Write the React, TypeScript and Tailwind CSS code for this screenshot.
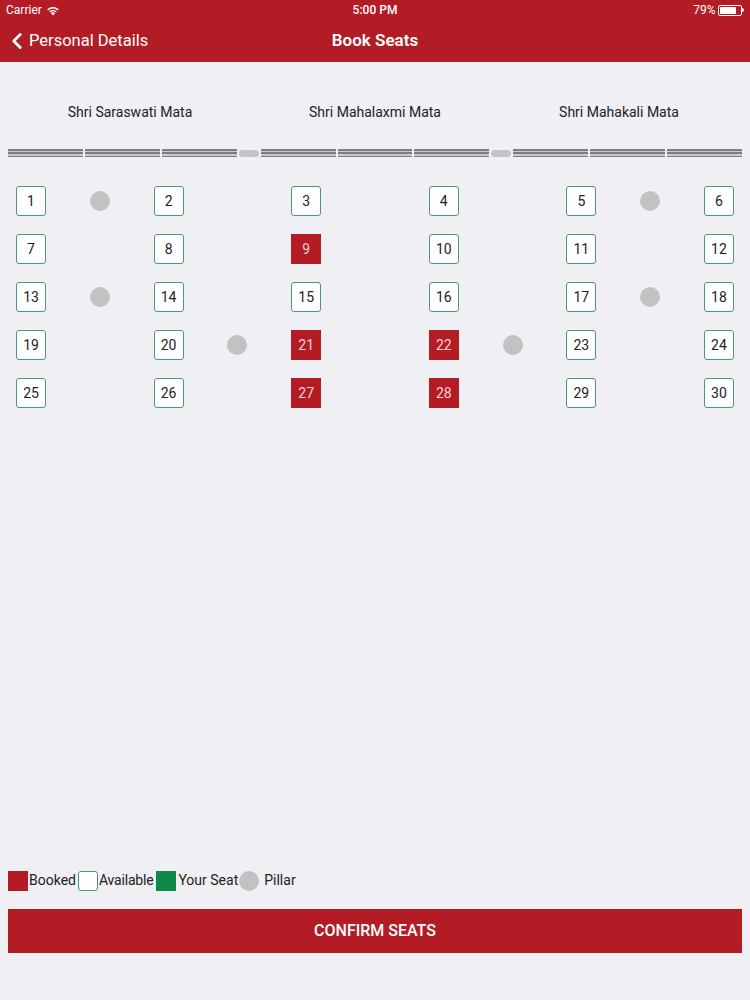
import { ChevronLeft } from 'lucide-react';

type SeatState = 'available' | 'booked';

const booked = new Set([9, 21, 22, 27, 28]);

// pillars by row index -> grid column index (0..10)
const pillars: Record<number, number[]> = {
  0: [1, 9],
  2: [1, 9],
  3: [3, 7],
};

const seatCols = [0, 2, 4, 6, 8, 10];

function Seat({ n }: { n: number }) {
  const state: SeatState = booked.has(n) ? 'booked' : 'available';
  return state === 'booked' ? (
    <div className="w-[30px] h-[30px] bg-[#b31c25] flex items-center justify-center text-[14px] text-[#f6d6d6]">
      {n}
    </div>
  ) : (
    <div className="w-[30px] h-[30px] bg-white border border-[#4a977a] rounded-[3px] flex items-center justify-center text-[14px] text-[#222]">
      {n}
    </div>
  );
}

function Pillar() {
  return <div className="w-[20px] h-[20px] rounded-full bg-[#c2c2c4]" />;
}

function Segment() {
  return (
    <div className="flex-1 h-[8px] bg-[#c9c9cc] flex flex-col justify-between">
      <div className="h-[1.5px] bg-[#7d7d80]" />
      <div className="h-[1.5px] bg-[#7d7d80]" />
      <div className="h-[1.5px] bg-[#7d7d80]" />
    </div>
  );
}

function Door() {
  return <div className="w-[20px] h-[7px] rounded-full bg-[#c4c4c6]" />;
}

function WifiIcon() {
  return (
    <svg width="14" height="11" viewBox="0 0 14 11" fill="white">
      <path d="M7 10.5 L4.9 8.1 A3.2 3.2 0 0 1 9.1 8.1 Z" />
      <path d="M3.3 6.5 A5.4 5.4 0 0 1 10.7 6.5 L9.7 7.6 A4 4 0 0 0 4.3 7.6 Z" />
      <path d="M1.3 4.3 A8.4 8.4 0 0 1 12.7 4.3 L11.7 5.4 A7 7 0 0 0 2.3 5.4 Z" />
    </svg>
  );
}

export default function App() {
  const rows = [0, 1, 2, 3, 4];

  return (
    <div className="w-[750px] h-[1000px] bg-[#efeff4] flex flex-col font-['Roboto',sans-serif]">
      {/* status + nav bar */}
      <div className="bg-[#b31c25] text-white">
        <div className="h-[20px] px-[6px] flex items-center justify-between text-[12px]">
          <div className="flex items-center gap-[4px] w-[120px]">
            <span>Carrier</span>
            <WifiIcon />
          </div>
          <span className="font-medium">5:00 PM</span>
          <div className="flex items-center justify-end gap-[3px] w-[120px]">
            <span>79%</span>
            <div className="flex items-center">
              <div className="w-[24px] h-[11px] border border-white rounded-[2px] p-[1px]">
                <div className="h-full w-[79%] bg-white rounded-[1px]" />
              </div>
              <div className="w-[1.5px] h-[4px] bg-white rounded-r-sm" />
            </div>
          </div>
        </div>
        <div className="h-[42px] relative flex items-center justify-center">
          <div className="absolute left-[4px] top-0 h-full flex items-center">
            <ChevronLeft size={26} strokeWidth={2.6} className="-mr-[1px]" />
            <span className="text-[16.5px]">Personal Details</span>
          </div>
          <span className="text-[17px] font-semibold">Book Seats</span>
        </div>
      </div>

      {/* section headings */}
      <div className="grid grid-cols-3 mt-[40px] text-[14px] text-[#222]">
        <div className="text-center pl-[10px]">Shri Saraswati Mata</div>
        <div className="text-center">Shri Mahalaxmi Mata</div>
        <div className="text-center pr-[12px]">Shri Mahakali Mata</div>
      </div>

      {/* screen divider */}
      <div className="mt-[26px] px-[8px] flex items-center gap-[2px]">
        <Segment />
        <Segment />
        <Segment />
        <Door />
        <Segment />
        <Segment />
        <Segment />
        <Door />
        <Segment />
        <Segment />
        <Segment />
      </div>

      {/* seats */}
      <div className="mt-[29px] ml-[-3.4px] grid grid-cols-[repeat(11,68.8px)] gap-y-[18px]">
        {rows.map((r) =>
          Array.from({ length: 11 }).map((_, c) => {
            const seatIdx = seatCols.indexOf(c);
            let content = null;
            if (seatIdx >= 0) content = <Seat n={r * 6 + seatIdx + 1} />;
            else if (pillars[r]?.includes(c)) content = <Pillar />;
            return (
              <div key={`${r}-${c}`} className="h-[30px] flex items-center justify-center">
                {content}
              </div>
            );
          })
        )}
      </div>

      <div className="flex-1" />

      {/* legend */}
      <div className="px-[8px] flex items-center text-[14px] text-[#222]">
        <div className="w-[20px] h-[20px] bg-[#b31c25]" />
        <span className="ml-[1px]">Booked</span>
        <div className="ml-[2px] w-[20px] h-[20px] bg-white border border-[#4a977a] rounded-[3px]" />
        <span className="ml-[1px] tracking-[-0.2px]">Available</span>
        <div className="ml-[3px] w-[20px] h-[20px] bg-[#0e8a48]" />
        <span className="ml-[2px]">Your Seat</span>
        <div className="ml-[1px] w-[20px] h-[20px] rounded-full bg-[#c2c2c4]" />
        <span className="ml-[5px]">Pillar</span>
      </div>

      {/* confirm */}
      <div className="mt-[18px] mb-[47px] px-[8px]">
        <button className="w-full h-[44px] bg-[#b31c25] text-white text-[16px] font-medium">
          CONFIRM SEATS
        </button>
      </div>
    </div>
  );
}
